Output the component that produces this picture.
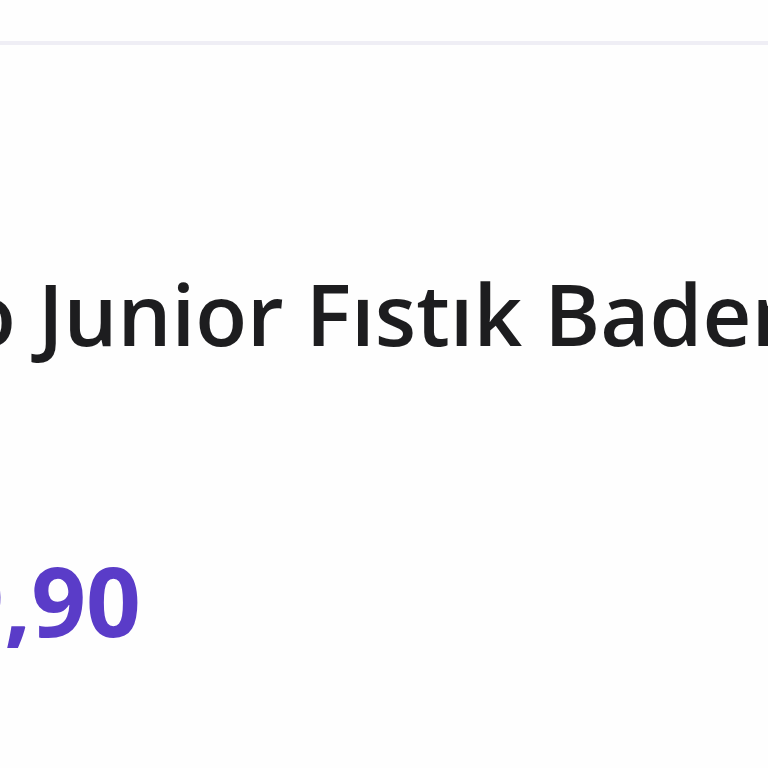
import React from 'react';

const App: React.FC = () => {
  return (
    <div className="w-[768px] h-[768px] overflow-hidden bg-[#fefefe]" style={{ fontFamily: '"Open Sans", "Noto Sans", sans-serif' }}>
      <div className="mt-[41px] h-[4px] bg-[#efeef5]" />
      <div className="overflow-hidden">
        <h3 className="mt-[226px] ml-[-36px] whitespace-nowrap text-[85px] leading-none font-semibold text-[#1d1d1f]">
          o Junior Fıstık Bademli Gofret
        </h3>
        <div className="mt-[196px] ml-[-106px] whitespace-nowrap text-[96px] leading-none font-bold text-[#5a3cc8]">
          49,90
        </div>
      </div>
    </div>
  );
};

export default App;
